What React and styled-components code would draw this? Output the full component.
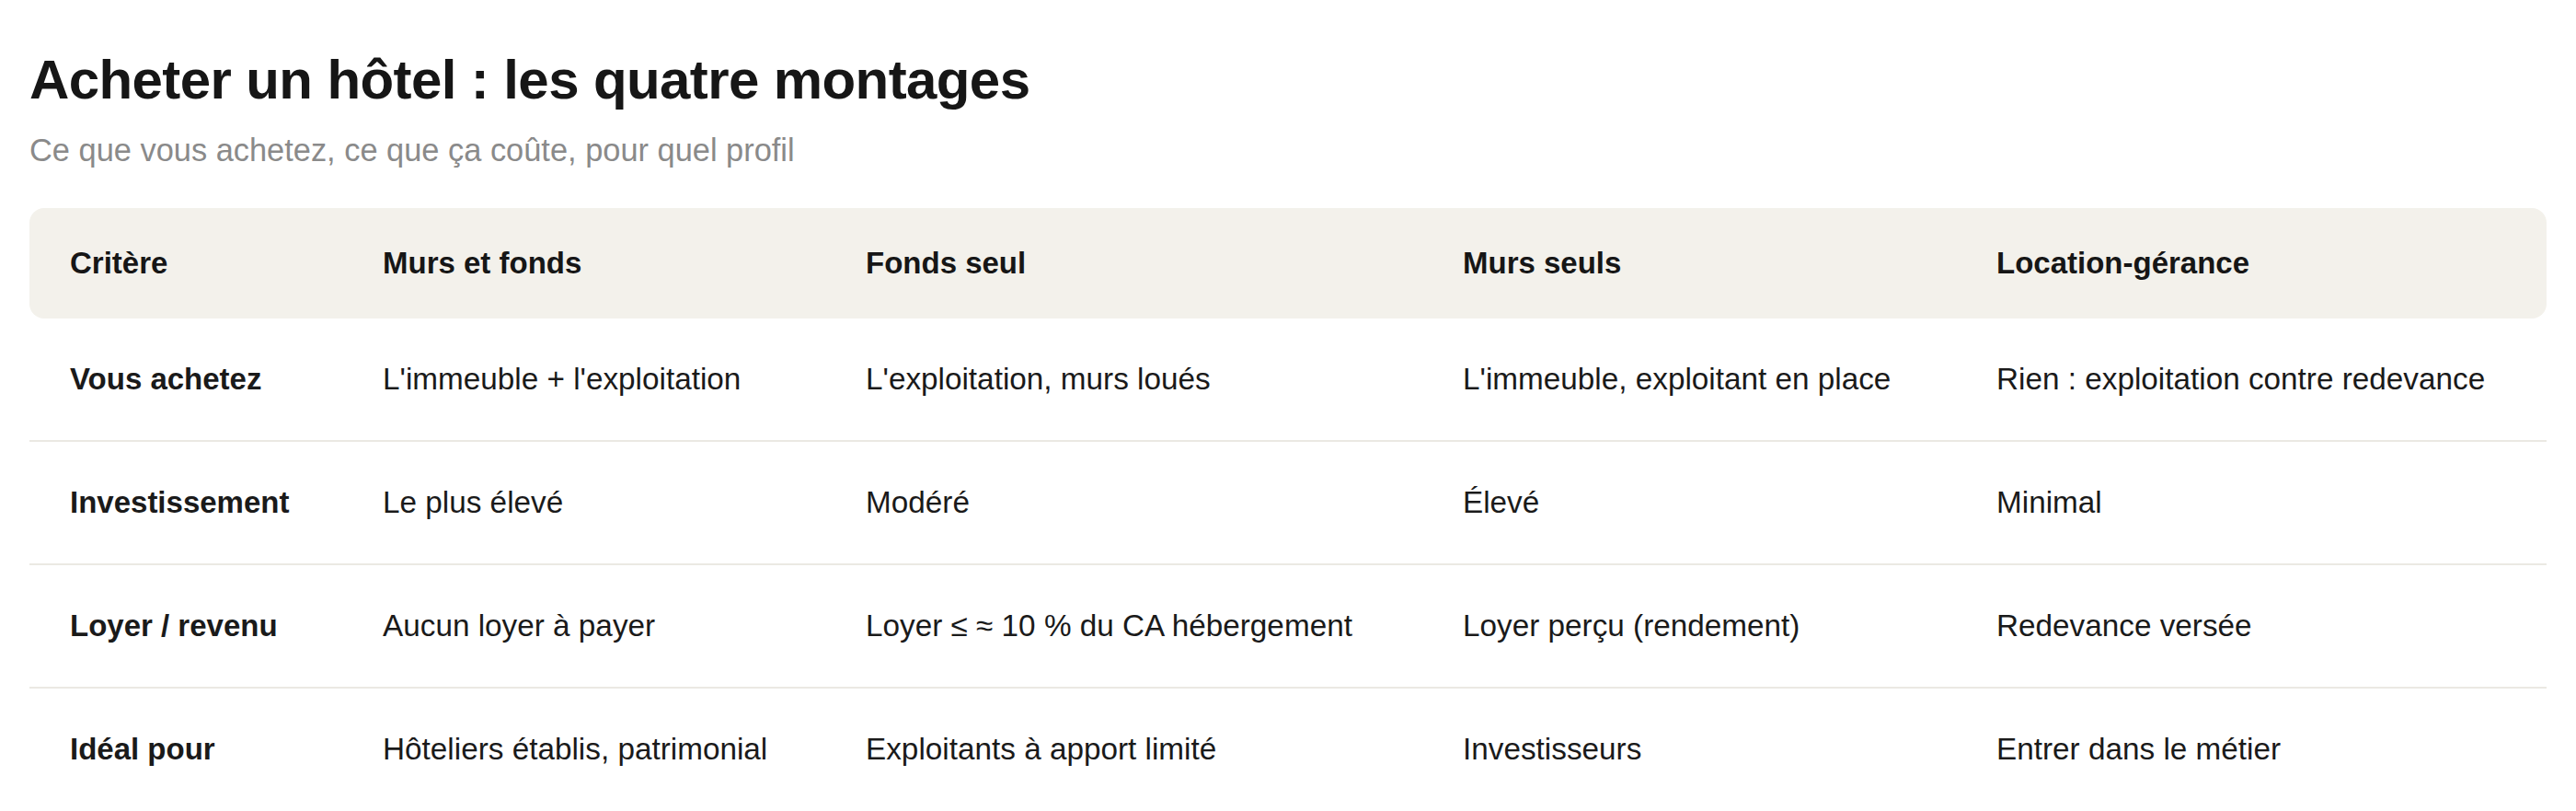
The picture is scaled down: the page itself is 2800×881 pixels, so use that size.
import React from "react";
import styled, { createGlobalStyle } from "styled-components";

const GlobalStyle = createGlobalStyle`
  html, body {
    margin: 0;
    padding: 0;
    background: #ffffff;
  }
  body {
    font-family: "Liberation Sans", Arial, Helvetica, sans-serif;
    color: #1a1a1a;
  }
`;

const Page = styled.div`
  padding: 51px 32px 0;
`;

const Title = styled.h1`
  margin: 0;
  font-size: 60px;
  line-height: 72px;
  font-weight: 700;
  letter-spacing: -0.01em;
  color: #161616;
`;

const Subtitle = styled.p`
  margin: 17px 0 0;
  font-size: 34.4px;
  line-height: 47.6px;
  color: #8a8a8a;
`;

const Table = styled.table`
  margin-top: 38px;
  width: 100%;
  table-layout: fixed;
  border-collapse: separate;
  border-spacing: 0;
`;

const HeadCell = styled.th`
  height: 120px;
  padding: 0 0 0 44px;
  text-align: left;
  font-size: 33px;
  font-weight: 700;
  color: #161616;
  background: #f3f1eb;
  &:first-child {
    border-radius: 16px 0 0 16px;
  }
  &:last-child {
    border-radius: 0 16px 16px 0;
  }
`;

const Row = styled.tr`
  &:not(:last-child) td {
    border-bottom: 2px solid #ebe9e3;
  }
`;

const Cell = styled.td`
  height: 132px;
  padding: 0 0 0 44px;
  font-size: ${(p) => (p.$label ? "33px" : "33.3px")};
  font-weight: ${(p) => (p.$label ? 700 : 400)};
  color: #1a1a1a;
  white-space: nowrap;
`;

const columns = [
  { label: "Critère", width: 340 },
  { label: "Murs et fonds", width: 525 },
  { label: "Fonds seul", width: 649 },
  { label: "Murs seuls", width: 580 },
  { label: "Location-gérance" },
];

const rows = [
  [
    "Vous achetez",
    "L'immeuble + l'exploitation",
    "L'exploitation, murs loués",
    "L'immeuble, exploitant en place",
    "Rien : exploitation contre redevance",
  ],
  ["Investissement", "Le plus élevé", "Modéré", "Élevé", "Minimal"],
  [
    "Loyer / revenu",
    "Aucun loyer à payer",
    "Loyer ≤ ≈ 10 % du CA hébergement",
    "Loyer perçu (rendement)",
    "Redevance versée",
  ],
  [
    "Idéal pour",
    "Hôteliers établis, patrimonial",
    "Exploitants à apport limité",
    "Investisseurs",
    "Entrer dans le métier",
  ],
];

const App = () => {
  return (
    <Page>
      <GlobalStyle />
      <Title>Acheter un hôtel : les quatre montages</Title>
      <Subtitle>Ce que vous achetez, ce que ça coûte, pour quel profil</Subtitle>
      <Table>
        <colgroup>
          {columns.map((c) => (
            <col key={c.label} style={c.width ? { width: c.width } : undefined} />
          ))}
        </colgroup>
        <thead>
          <tr>
            {columns.map((c) => (
              <HeadCell key={c.label}>{c.label}</HeadCell>
            ))}
          </tr>
        </thead>
        <tbody>
          {rows.map((r) => (
            <Row key={r[0]}>
              {r.map((v, i) => (
                <Cell key={i} $label={i === 0}>
                  {v}
                </Cell>
              ))}
            </Row>
          ))}
        </tbody>
      </Table>
    </Page>
  );
};

export default App;
